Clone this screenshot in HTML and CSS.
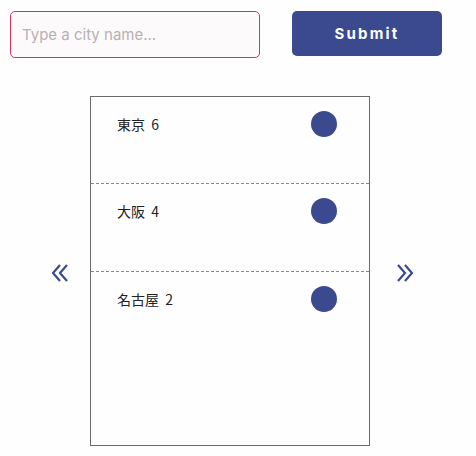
FILE: index.html
```html
<!DOCTYPE html>
<html lang="ja">

<head>
    <meta charset="UTF-8">
    <meta name="viewport" content="width=device-width, initial-scale=1.0">
    <title>Cities</title>
    <link rel="stylesheet" href="styles.css">
</head>

<body>
    <form class="search">
        <input type="text" placeholder="Type a city name...">
        <button type="button">Submit</button>
    </form>

    <div class="slider">
        <span class="arrow" id="prev">
            <svg width="16" height="18" viewBox="0 0 16 18">
                <polyline points="8,1 1,9 8,17" />
                <polyline points="15,1 8,9 15,17" />
            </svg>
        </span>

        <ul class="list">
            <li><span class="name">東京&nbsp; 6</span><i class="dot"></i></li>
            <li><span class="name">大阪&nbsp; 4</span><i class="dot"></i></li>
            <li><span class="name">名古屋&nbsp; 2</span><i class="dot"></i></li>
        </ul>

        <span class="arrow" id="next">
            <svg width="16" height="18" viewBox="0 0 16 18">
                <polyline points="1,1 8,9 1,17" />
                <polyline points="8,1 15,9 8,17" />
            </svg>
        </span>
    </div>
</body>

</html>
```

FILE: styles.css
```css
* {
    margin: 0;
    padding: 0;
    list-style: none;
    box-sizing: border-box;
}

body {
    background-color: #fefefe;
    font-family: Inter, "Noto Sans", sans-serif;
}

.search {
    display: flex;
    align-items: flex-start;
    gap: 32px;
    padding: 11px 0 0 10px;
}

.search input {
    width: 250px;
    height: 47px;
    border: 1px solid #d5325c;
    border-radius: 5px;
    background-color: #fdfafb;
    padding: 0 11px;
    font-family: Inter, sans-serif;
    font-size: 15px;
    color: #333;
    outline: none;
}

.search input::placeholder {
    color: #b7b1b2;
}

.search button {
    width: 150px;
    height: 45px;
    border: none;
    border-radius: 5px;
    background-color: #3b4a8f;
    color: #fff;
    font-family: Inter, sans-serif;
    font-size: 15px;
    font-weight: 700;
    letter-spacing: 2.2px;
}

.slider {
    display: flex;
    align-items: center;
    margin-top: 38px;
}

.arrow {
    display: flex;
    width: 16px;
    height: 18px;
    margin-top: 4px;
}

.arrow svg polyline {
    fill: none;
    stroke: #3b4a8f;
    stroke-width: 2.2;
}

#prev {
    margin-left: 52px;
    margin-right: 22px;
}

#next {
    margin-left: 27px;
}

.list {
    width: 280px;
    height: 350px;
    border: 1px solid #6a6a6a;
}

.list li {
    display: flex;
    justify-content: space-between;
    align-items: flex-start;
    height: 87px;
    padding: 14px 32px 0 26px;
}

.list li + li {
    height: 88px;
}

.list li:nth-child(-n+2) {
    border-bottom: 1px dashed #888;
}

.name {
    font-family: "Noto Sans CJK JP", sans-serif;
    font-size: 14px;
    line-height: 26px;
    color: #222;
}

.dot {
    width: 26px;
    height: 26px;
    border-radius: 50%;
    background-color: #3b4a8f;
}
```
